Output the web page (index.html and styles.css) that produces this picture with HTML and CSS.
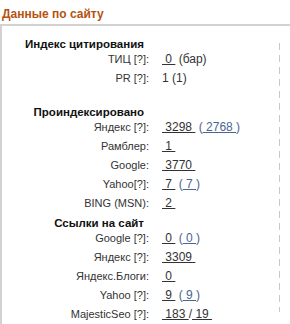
FILE: index.html
```html
<!DOCTYPE html>
<html lang="ru">
<head>
<meta charset="utf-8">
<title>Данные по сайту</title>
<link rel="stylesheet" href="styles.css">
</head>
<body>
<div class="box">
  <h2 class="title">Данные по сайту</h2>
  <div class="panel">
    <div class="stats">
      <div class="head">Индекс цитирования</div>
      <div class="row"><span class="lbl">ТИЦ [?]:</span><span class="val"><a href="#">&nbsp;0&nbsp;</a> (бар)</span></div>
      <div class="row"><span class="lbl">PR [?]:</span><span class="val">1 (1)</span></div>
      <div class="row empty"></div>
      <div class="head">Проиндексировано</div>
      <div class="row"><span class="lbl">Яндекс [?]:</span><span class="val"><a href="#">&nbsp;3298&nbsp;</a> <span class="sub">(<a href="#">&nbsp;2768&nbsp;</a>)</span></span></div>
      <div class="row"><span class="lbl">Рамблер:</span><span class="val"><a href="#">&nbsp;1&nbsp;</a></span></div>
      <div class="row"><span class="lbl">Google:</span><span class="val"><a href="#">&nbsp;3770&nbsp;</a></span></div>
      <div class="row"><span class="lbl">Yahoo[?]:</span><span class="val"><a href="#">&nbsp;7&nbsp;</a> <span class="sub">(<a href="#">&nbsp;7&nbsp;</a>)</span></span></div>
      <div class="row"><span class="lbl">BING (MSN):</span><span class="val"><a href="#">&nbsp;2&nbsp;</a></span></div>
      <div class="head gap">Ссылки на сайт</div>
      <div class="row"><span class="lbl">Google [?]:</span><span class="val"><a href="#">&nbsp;0&nbsp;</a> <span class="sub">(<a href="#">&nbsp;0&nbsp;</a>)</span></span></div>
      <div class="row"><span class="lbl">Яндекс [?]:</span><span class="val"><a href="#">&nbsp;3309&nbsp;</a></span></div>
      <div class="row"><span class="lbl">Яндекс.Блоги:</span><span class="val"><a href="#">&nbsp;0&nbsp;</a></span></div>
      <div class="row"><span class="lbl">Yahoo [?]:</span><span class="val"><a href="#">&nbsp;9&nbsp;</a> <span class="sub">(<a href="#">&nbsp;9&nbsp;</a>)</span></span></div>
      <div class="row"><span class="lbl">MajesticSeo [?]:</span><span class="val"><a href="#">&nbsp;183&nbsp;</a>/<a href="#">&nbsp;19&nbsp;</a></span></div>
    </div>
    <div class="divider"></div>
  </div>
</div>
</body>
</html>
```

FILE: styles.css
```css
html, body {
  margin: 0;
  padding: 0;
  background: #fff;
}
body {
  font-family: "Liberation Sans", Arial, sans-serif;
  color: #333;
  width: 290px;
  height: 324px;
  overflow: hidden;
}
.title {
  margin: 0;
  padding: 7px 0 3px 2px;
  font-size: 12px;
  line-height: 14px;
  font-weight: bold;
  color: #b5520f;
}
.panel {
  display: flex;
  border-top: 2px solid #d2d2d2;
  border-left: 2px solid #d2d2d2;
  padding-top: 13px;
}
.stats {
  width: 277px;
  display: flex;
  flex-direction: column;
}
.head {
  width: 147px;
  box-sizing: border-box;
  padding-right: 5px;
  text-align: right;
  font-size: 11.5px;
  line-height: 11px;
  font-weight: bold;
  color: #111;
}
.head.gap {
  margin-top: 5px;
}
.row {
  display: grid;
  grid-template-columns: 147px 1fr;
  column-gap: 13px;
  height: 19px;
  line-height: 19px;
  white-space: nowrap;
}
.lbl {
  text-align: right;
  font-size: 11px;
}
.val {
  font-size: 12px;
}
.val a {
  color: #333;
  text-decoration: underline;
}
.sub, .sub a {
  color: #4a6592;
}
.divider {
  width: 1px;
  margin: 4px 0 12px;
  background: repeating-linear-gradient(to bottom, #c8c8c8 0 7px, transparent 7px 12px);
}
```
